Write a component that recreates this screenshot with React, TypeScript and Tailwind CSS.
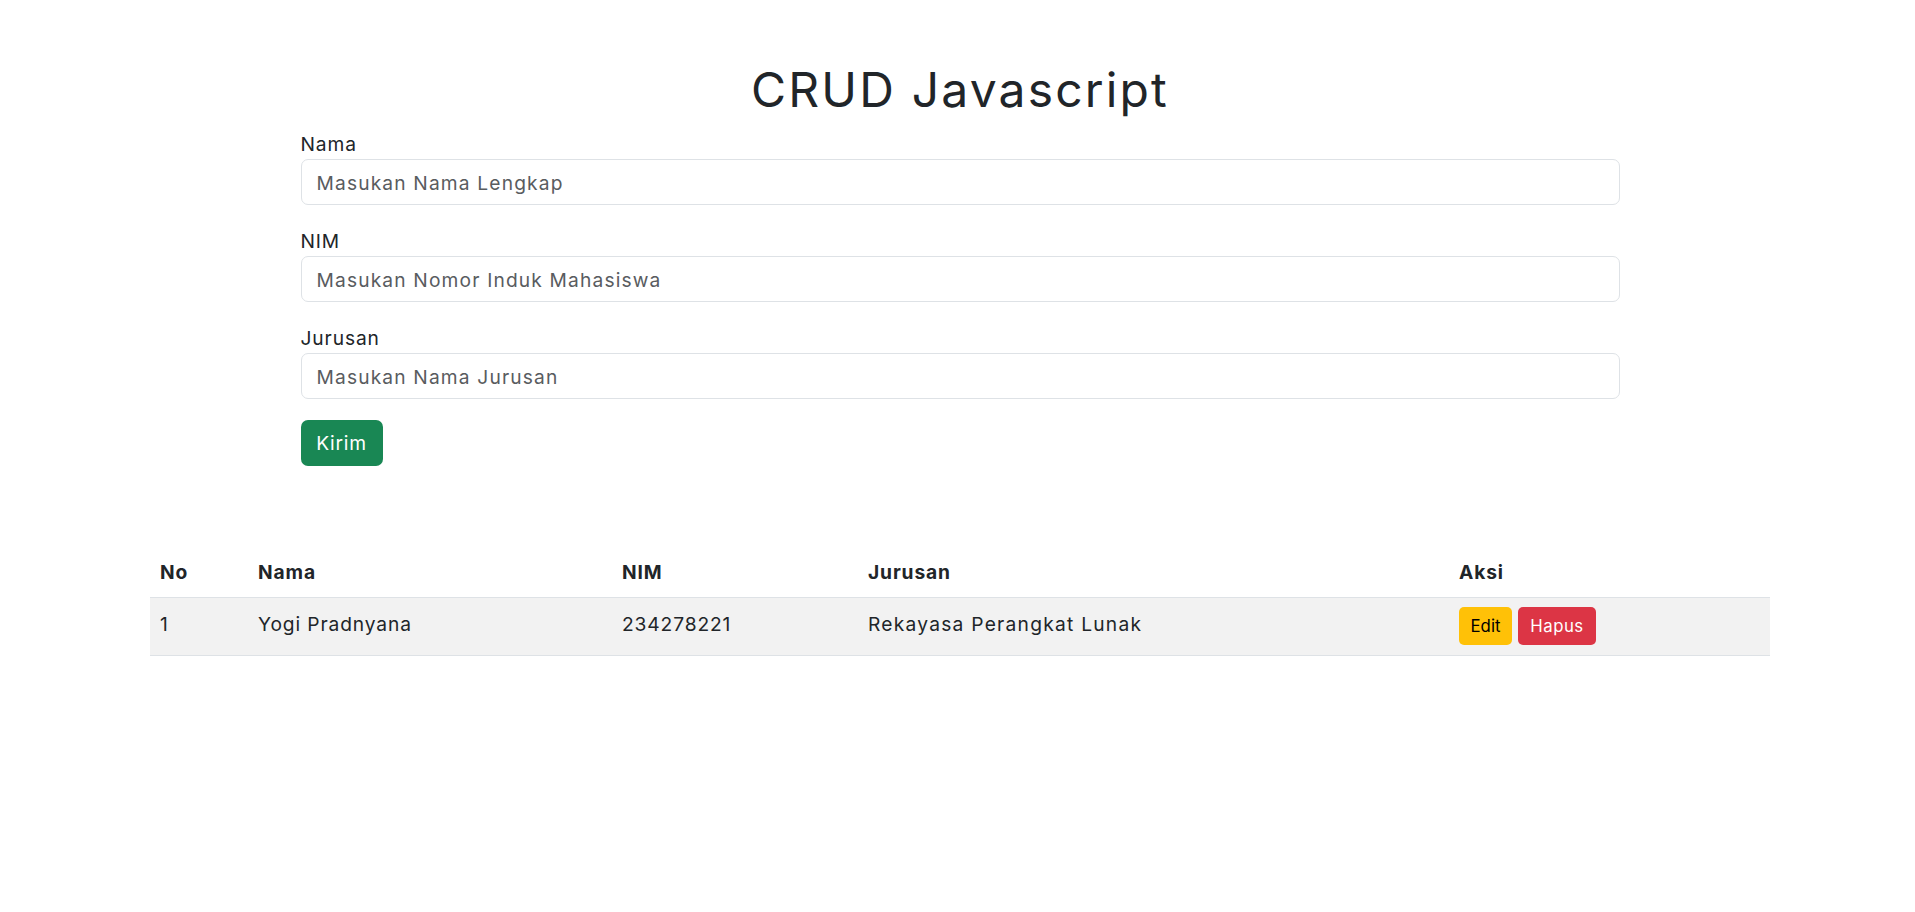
import { useState } from 'react'

type Mahasiswa = { nama: string; nim: string; jurusan: string }

const fields = [
  { key: 'nama', label: 'Nama', placeholder: 'Masukan Nama Lengkap', gap: 'mb-[22px]' },
  { key: 'nim', label: 'NIM', placeholder: 'Masukan Nomor Induk Mahasiswa', gap: 'mb-[22px]' },
  { key: 'jurusan', label: 'Jurusan', placeholder: 'Masukan Nama Jurusan', gap: 'mb-[21px]' },
] as const

export default function App() {
  const [rows] = useState<Mahasiswa[]>([
    { nama: 'Yogi Pradnyana', nim: '234278221', jurusan: 'Rekayasa Perangkat Lunak' },
  ])

  return (
    <div className="min-h-screen pl-[5px] bg-white text-[#212529] tracking-[0.055em] font-['Inter','Noto_Sans',sans-serif]">
      <h1 className="pt-[61px] mb-[11px] text-center text-[48px] leading-[57.6px] font-normal tracking-[0.045em]">
        CRUD Javascript
      </h1>

      {/* Form */}
      <form className="mx-auto w-[1319px] flex flex-col" onSubmit={(e) => e.preventDefault()}>
        {fields.map((f) => (
          <div key={f.key} className={f.gap}>
            <label htmlFor={f.key} className="block h-[29px] text-[19.2px] leading-[28.8px]">
              {f.label}
            </label>
            <input
              id={f.key}
              type="text"
              placeholder={f.placeholder}
              className="block w-full h-[46px] pt-[2px] px-[15px] rounded-[7px] border border-[#dee2e6] text-[19.2px] tracking-[0.06em] text-[#212529] placeholder:text-[#595c5f] outline-none"
            />
          </div>
        ))}
        <button
          type="submit"
          className="w-[82px] h-[46px] pt-[1px] rounded-[7px] bg-[#198754] text-white text-[19.2px] tracking-[0.04em]"
        >
          Kirim
        </button>
      </form>

      {/* Table */}
      <div className="mx-auto w-[1620px] mt-[83px]">
        <table className="w-full table-fixed border-collapse text-[19.2px] leading-[28.8px]">
          <thead>
            <tr className="border-b border-[#dee2e6]">
              <th className="w-[98px] px-[10px] py-[9.6px] text-left font-bold">No</th>
              <th className="w-[364px] px-[10px] py-[9.6px] text-left font-bold">Nama</th>
              <th className="w-[246px] px-[10px] py-[9.6px] text-left font-bold">NIM</th>
              <th className="w-[591px] px-[10px] py-[9.6px] text-left font-bold">Jurusan</th>
              <th className="px-[10px] py-[9.6px] text-left font-bold">Aksi</th>
            </tr>
          </thead>
          <tbody>
            {rows.map((r, i) => (
              <tr key={r.nim} className="bg-[#f2f2f2] border-b border-[#dee2e6]">
                <td className="px-[10px] pt-[12px] pb-[9.6px] align-top">{i + 1}</td>
                <td className="px-[10px] pt-[12px] pb-[9.6px] align-top">{r.nama}</td>
                <td className="px-[10px] pt-[12px] pb-[9.6px] align-top">{r.nim}</td>
                <td className="px-[10px] pt-[12px] pb-[9.6px] align-top tracking-[0.065em]">{r.jurusan}</td>
                <td className="px-[10px] py-[9.6px] align-top">
                  <div className="flex gap-[6px]">
                    <button className="w-[53px] h-[38px] rounded-[5px] bg-[#ffc107] text-black text-[16.8px] tracking-normal">
                      Edit
                    </button>
                    <button className="w-[78px] h-[38px] rounded-[5px] bg-[#dc3545] text-white text-[16.8px] tracking-[0.03em]">
                      Hapus
                    </button>
                  </div>
                </td>
              </tr>
            ))}
          </tbody>
        </table>
      </div>
    </div>
  )
}
